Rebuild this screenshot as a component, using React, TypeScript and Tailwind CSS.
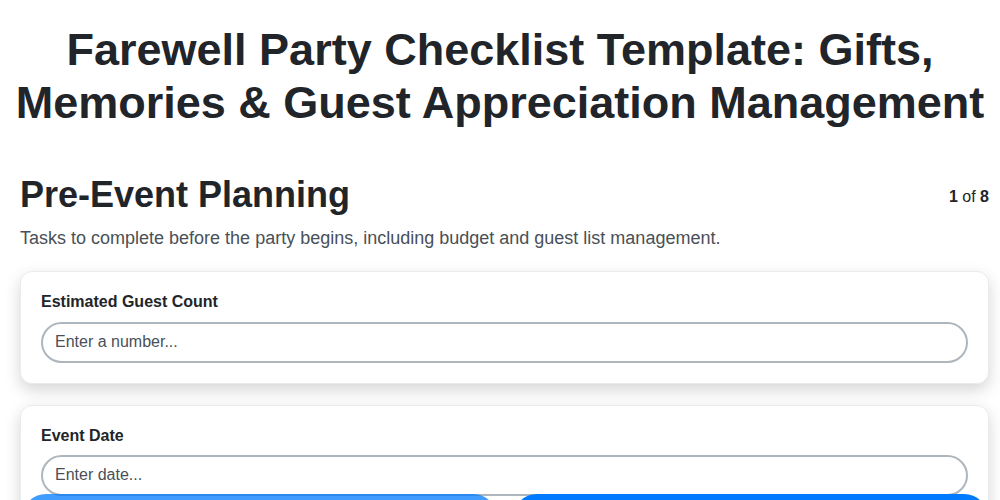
import React from "react";

const fields = [
  { label: "Estimated Guest Count", placeholder: "Enter a number..." },
  { label: "Event Date", placeholder: "Enter date..." },
  { label: "Budget Limit", placeholder: "Enter amount..." },
];

export default function App() {
  return (
    <div className="min-h-screen bg-white font-['Liberation_Sans',Arial,sans-serif] text-[#212529]">
      {/* Page title */}
      <h1 className="px-2 pt-6 text-center text-[45px] font-bold leading-[1.17]">
        Farewell Party Checklist Template: Gifts, Memories &amp; Guest Appreciation Management
      </h1>

      <div className="pl-5 pr-[11px] pt-[44px] pb-24">
        {/* Section header */}
        <div className="flex items-start justify-between">
          <h2 className="text-[36px] font-bold leading-[1.2]">Pre-Event Planning</h2>
          <div className="pt-3 text-base">
            <span className="font-bold">1</span> of <span className="font-bold">8</span>
          </div>
        </div>
        <p className="mt-2 text-lg text-[#495057]">
          Tasks to complete before the party begins, including budget and guest list management.
        </p>

        {/* Fields */}
        <div className="mt-[19px] flex flex-col gap-[21px]">
          {fields.map((f) => (
            <div
              key={f.label}
              className="rounded-xl border border-[#e9ecef] bg-white px-5 pt-5 pb-5 shadow-[0_6px_16px_rgba(0,0,0,0.17)]"
            >
              <label className="mb-[10px] block text-base font-bold leading-[1.2]">{f.label}</label>
              <input
                type="text"
                placeholder={f.placeholder}
                className="h-[41px] w-full rounded-full border-2 border-[#adb5bd] bg-white px-3 text-base text-[#212529] placeholder:text-[#495057] outline-none"
              />
            </div>
          ))}
        </div>
      </div>

      {/* Footer nav */}
      <div className="fixed inset-x-0 bottom-[-58px] flex gap-4 pl-[22px] pr-3">
        <button className="h-16 flex-1 rounded-3xl bg-[#007bff] text-white opacity-75">Previous</button>
        <button className="h-16 flex-1 rounded-3xl bg-[#007bff] text-white">Next</button>
      </div>
    </div>
  );
}
